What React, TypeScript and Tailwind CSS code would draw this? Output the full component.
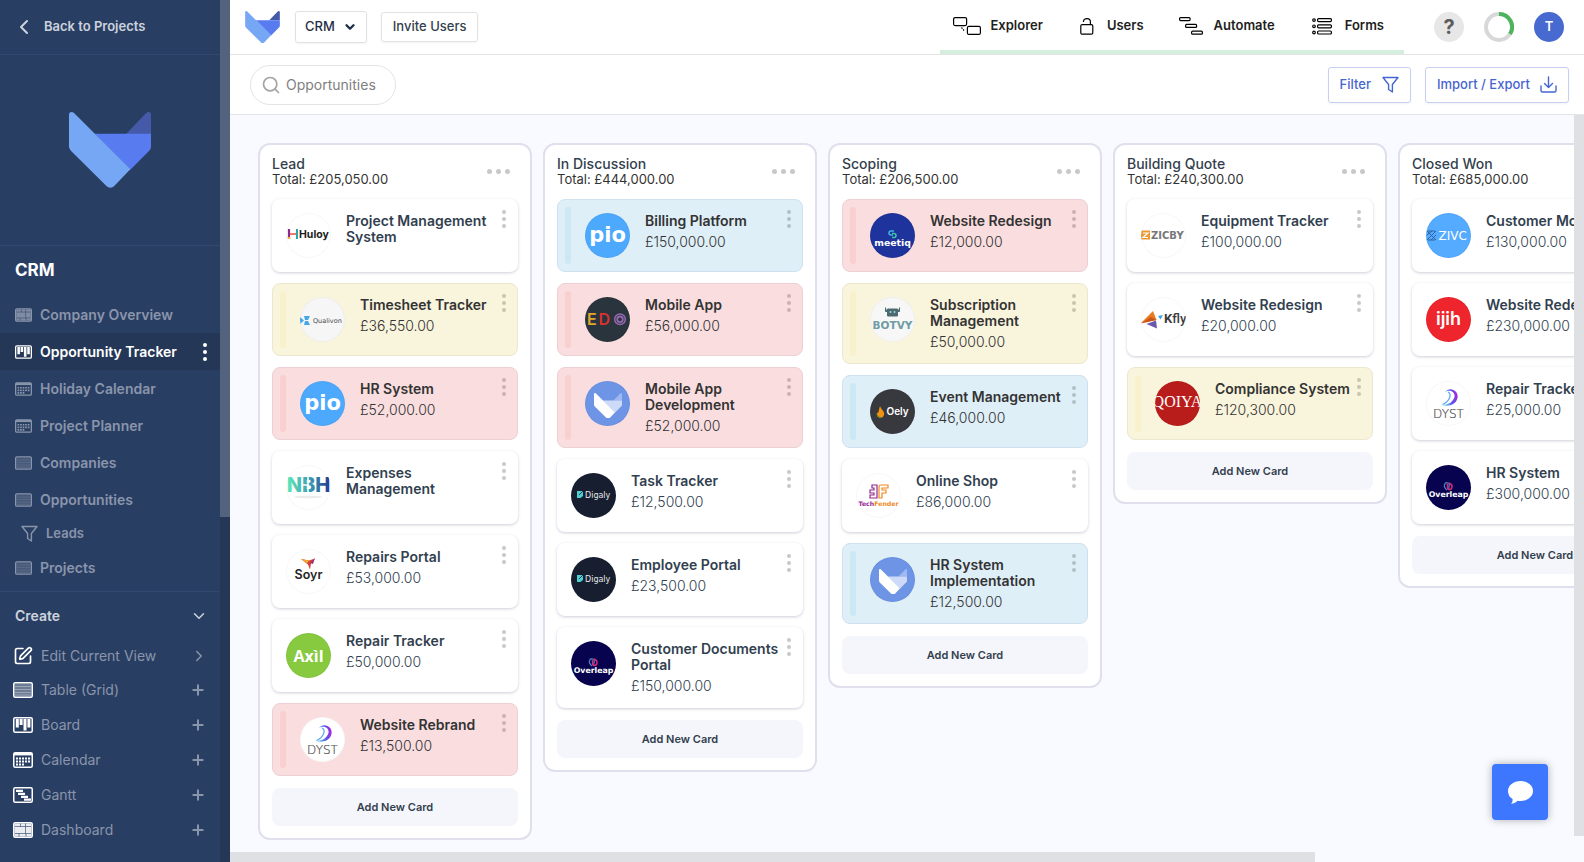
import type { ReactNode } from "react";
import { ChevronDown, ChevronLeft, ChevronRight, Plus, Search, SquarePen } from "lucide-react";
import clsx from "clsx";

type Tone = "plain" | "red" | "yellow" | "blue";

interface CardData {
  title: string;
  price?: string;
  brand: string;
  tone?: Tone;
}

interface ColumnData {
  name: string;
  total: string;
  cards: CardData[];
}

type ViewKind = "dashboard" | "board" | "calendar" | "table" | "gantt";

const COLUMNS: ColumnData[] = [
  {
    name: "Lead",
    total: "£205,050.00",
    cards: [
      { title: "Project Management System", brand: "huloy" },
      { title: "Timesheet Tracker", price: "£36,550.00", brand: "qualivon", tone: "yellow" },
      { title: "HR System", price: "£52,000.00", brand: "pio", tone: "red" },
      { title: "Expenses Management", brand: "nbh" },
      { title: "Repairs Portal", price: "£53,000.00", brand: "soyr" },
      { title: "Repair Tracker", price: "£50,000.00", brand: "axil" },
      { title: "Website Rebrand", price: "£13,500.00", brand: "dyst", tone: "red" },
    ],
  },
  {
    name: "In Discussion",
    total: "£444,000.00",
    cards: [
      { title: "Billing Platform", price: "£150,000.00", brand: "pio", tone: "blue" },
      { title: "Mobile App", price: "£56,000.00", brand: "edo", tone: "red" },
      { title: "Mobile App Development", price: "£52,000.00", brand: "fox", tone: "red" },
      { title: "Task Tracker", price: "£12,500.00", brand: "digaly" },
      { title: "Employee Portal", price: "£23,500.00", brand: "digaly" },
      { title: "Customer Documents Portal", price: "£150,000.00", brand: "overleap" },
    ],
  },
  {
    name: "Scoping",
    total: "£206,500.00",
    cards: [
      { title: "Website Redesign", price: "£12,000.00", brand: "meetiq", tone: "red" },
      { title: "Subscription Management", price: "£50,000.00", brand: "botvy", tone: "yellow" },
      { title: "Event Management", price: "£46,000.00", brand: "oely", tone: "blue" },
      { title: "Online Shop", price: "£86,000.00", brand: "techfender" },
      { title: "HR System Implementation", price: "£12,500.00", brand: "fox", tone: "blue" },
    ],
  },
  {
    name: "Building Quote",
    total: "£240,300.00",
    cards: [
      { title: "Equipment Tracker", price: "£100,000.00", brand: "zicby" },
      { title: "Website Redesign", price: "£20,000.00", brand: "kfly" },
      { title: "Compliance System", price: "£120,300.00", brand: "qoiya", tone: "yellow" },
    ],
  },
  {
    name: "Closed Won",
    total: "£685,000.00",
    cards: [
      { title: "Customer Mobile App", price: "£130,000.00", brand: "zivc" },
      { title: "Website Redesign", price: "£230,000.00", brand: "ijih" },
      { title: "Repair Tracker", price: "£25,000.00", brand: "dyst" },
      { title: "HR System", price: "£300,000.00", brand: "overleap" },
    ],
  },
];

const VIEWS: { label: string; icon: ViewKind }[] = [
  { label: "Company Overview", icon: "dashboard" },
  { label: "Opportunity Tracker", icon: "board" },
  { label: "Holiday Calendar", icon: "calendar" },
  { label: "Project Planner", icon: "calendar" },
  { label: "Companies", icon: "table" },
  { label: "Opportunities", icon: "table" },
];

const CREATE_ITEMS: { label: string; icon: ViewKind }[] = [
  { label: "Table (Grid)", icon: "table" },
  { label: "Board", icon: "board" },
  { label: "Calendar", icon: "calendar" },
  { label: "Gantt", icon: "gantt" },
  { label: "Dashboard", icon: "dashboard" },
];

function FoxLogo({ className, colors = ["#76a7f4", "#597bf0", "#4459a8"] }: { className?: string; colors?: string[] }) {
  return (
    <svg viewBox="0 0 246 227" className={className} aria-hidden="true">
      <path d="M171 66 231 4Q235 0 239 0Q246 0 246 7V66Z" fill={colors[2]} />
      <path d="M76 65H246V104Q246 111 240 117L184 173Z" fill={colors[1]} />
      <path
        d="M0 8Q0 0 8 0Q12 0 15 3L184 172 135 223Q131 227 124 227Q117 227 113 223L7 118Q0 110 0 104Z"
        fill={colors[0]}
      />
    </svg>
  );
}

function ViewIcon({ kind, className }: { kind: ViewKind; className?: string }) {
  return (
    <svg viewBox="0 0 20 16" className={className} fill="none" stroke="currentColor" aria-hidden="true">
      <rect x="0.75" y="0.75" width="18.5" height="14.5" rx="1.5" strokeWidth="1.5" />
      {kind === "table" && (
        <>
          <rect x="1.5" y="1.5" width="17" height="13" fill="currentColor" fillOpacity="0.32" stroke="none" />
          <path d="M2 4.5h16M2 7.5h16M2 10.500h16M2 13h16" strokeWidth="0.8" strokeOpacity="0.4" />
        </>
      )}
      {kind === "board" && (
        <path d="M4.300 2v8.5M8.100 2v6M12 2v11.500M15.900 2v8.5" strokeWidth="3" />
      )}
      {kind === "calendar" && (
        <>
          <path d="M1 2.2h18" strokeWidth="2.400" />
          <path d="M3 6.500h14.5M3 9.500h14.500" strokeWidth="2" strokeDasharray="2 1" />
          <path d="M3 12.500h8.500" strokeWidth="2" strokeDasharray="2 1" />
        </>
      )}
      {kind === "gantt" && (
        <path d="M3 3.800h7M5 6.800h7M8 9.800h7M11 12.600h7" strokeWidth="2.200" />
      )}
      {kind === "dashboard" && (
        <>
          <rect x="1.5" y="1.5" width="17" height="13" fill="currentColor" fillOpacity="0.9" stroke="none" />
          <path d="M2 4.500h16M2 11.500h16M7.500 1.500v3M12.500 1.500v10M6 11.500v3M13 11.500v3" stroke="#293e63" strokeWidth="1" strokeOpacity="0.6" />
        </>
      )}
    </svg>
  );
}

function FunnelIcon({ className }: { className?: string }) {
  return (
    <svg viewBox="0 0 17 17" className={className} fill="none" stroke="currentColor" strokeWidth="1.4" strokeLinejoin="round" aria-hidden="true">
      <path d="M1 1.5h15L10.4 8.5V16L6.6 13.500V8.500Z" />
    </svg>
  );
}

function Dots({ vertical, size = "small" }: { vertical?: boolean; size?: "small" | "large" }) {
  const dot = clsx("rounded-full bg-current", size === "large" ? "size-[5px]" : "size-1");
  return (
    <span className={clsx("flex", vertical ? "flex-col gap-[3px]" : "gap-1")}>
      <span className={dot} />
      <span className={dot} />
      <span className={dot} />
    </span>
  );
}

const INTER = "Inter, sans-serif";
const WIDE = '"DejaVu Sans", sans-serif';

const BRANDS: Record<string, { bg: string; art: ReactNode }> = {
  huloy: {
    bg: "#ffffff",
    art: (
      <>
        <path d="M3 16v10" stroke="#8e2a8c" strokeWidth="2.2" />
        <path d="M3 24v2" stroke="#f3b32b" strokeWidth="2.2" />
        <path d="M4 21h6" stroke="#e0533d" strokeWidth="1.6" />
        <path d="M11 16v10" stroke="#2ba6a4" strokeWidth="2" />
        <text x="13" y="25" fontFamily={INTER} fontWeight="700" fontSize="10.500" fill="#1c1c1c">Huloy</text>
      </>
    ),
  },
  qualivon: {
    bg: "#f6f6f7",
    art: (
      <>
        <path d="M0 20v7L4 23.500ZM4 19h6l-2 4H5ZM4 28h6l-2-4H5Z" fill="#45a8e6" />
        <text x="13" y="26" fontFamily={WIDE} fontSize="6.500" fill="#4a4a4a">Qualivon</text>
      </>
    ),
  },
  pio: {
    bg: "#4ca9fd",
    art: <text x="22.500" y="29" textAnchor="middle" fontFamily={WIDE} fontWeight="700" fontSize="21" fill="#fff">pio</text>,
  },
  nbh: {
    bg: "#ffffff",
    art: (
      <>
        <defs>
          <linearGradient id="nbh" x1="0" x2="1">
            <stop offset="0" stopColor="#5fe8b5" />
            <stop offset="0.5" stopColor="#3fa3b4" />
            <stop offset="1" stopColor="#25378f" />
          </linearGradient>
        </defs>
        <text x="22.500" y="27" textAnchor="middle" fontFamily={INTER} fontWeight="800" fontSize="20" fill="url(#nbh)">NBH</text>
        <path d="M17 20h6M22 12v16" stroke="#fff" strokeWidth="1.500" />
        <ellipse cx="22" cy="32" rx="14" ry="1.300" fill="#ebebeb" />
      </>
    ),
  },
  soyr: {
    bg: "#ffffff",
    art: (
      <>
        <path d="M15 10l8 1.500 6-2-4 5-1 6-2-5Z" fill="#d8403f" />
        <path d="M15 10l8 1.500-2 3Z" fill="#f0a52b" />
        <path d="M24 14l5-5-2 6Z" fill="#93306f" />
        <text x="22.500" y="30" textAnchor="middle" fontFamily={INTER} fontWeight="600" fontSize="12.500" fill="#262626">Soyr</text>
      </>
    ),
  },
  axil: {
    bg: "#87c93f",
    art: <text x="22.500" y="29" textAnchor="middle" fontFamily='"Open Sans", sans-serif' fontWeight="700" fontSize="16" fill="#fff">Axìl</text>,
  },
  dyst: {
    bg: "#ffffff",
    art: (
      <>
        <defs>
          <linearGradient id="dyst" x1="0" x2="1" y1="0.5" y2="0.3">
            <stop offset="0" stopColor="#59dff0" />
            <stop offset="0.6" stopColor="#5a55e8" />
            <stop offset="1" stopColor="#b01fe0" />
          </linearGradient>
        </defs>
        <path d="M19 11C24 5 33 10 31.500 17C30 24 22 26 16 24C22 24 27 21 28.500 16C29.500 11 24 8 19 11Z" fill="url(#dyst)" />
        <path d="M22 11C26 13 24 20 16.500 23.500" fill="none" stroke="#65a8f2" strokeWidth="1.300" />
        <text x="22.500" y="37" textAnchor="middle" fontFamily={WIDE} fontWeight="200" fontSize="12" fill="#4a4a4a" stroke="#4a4a4a" strokeWidth="0.200">DYST</text>
      </>
    ),
  },
  edo: {
    bg: "#2a343d",
    art: (
      <g fontFamily={INTER} fontWeight="600" fontSize="16">
        <text x="2" y="28" fill="#e0a72e">E</text>
        <text x="13.500" y="28" fill="#dc3131">D</text>
        <circle cx="35" cy="22.300" r="5.300" fill="none" stroke="#9469b1" strokeWidth="1.500" />
        <circle cx="35" cy="22.300" r="2.800" fill="none" stroke="#9469b1" strokeWidth="1.800" />
      </g>
    ),
  },
  digaly: {
    bg: "#171e2f",
    art: (
      <>
        <path d="M6 18h6v5l-2.500 2H6v-5Z" fill="#50cfd0" />
        <path d="M8 22l4-4" stroke="#171e2f" strokeWidth="0.800" />
        <text x="14" y="25" fontFamily={WIDE} fontSize="8" fill="#e6e8ec">Digaly</text>
      </>
    ),
  },
  overleap: {
    bg: "#08034f",
    art: (
      <>
        <path d="M21 25C16 21 19 17 22 18C25 19 22 22 23 24" fill="none" stroke="#4b7cc9" strokeWidth="1.300" />
        <path d="M23 18C28 20 26 25 23 24.500C20 24 23 21 21 19" fill="none" stroke="#d52a73" strokeWidth="1.600" />
        <text x="22.500" y="31.500" textAnchor="middle" fontFamily={WIDE} fontWeight="700" fontSize="7.800" fill="#fff">Overleap</text>
      </>
    ),
  },
  meetiq: {
    bg: "#1e339b",
    art: (
      <>
        <path d="M24 18H21Q19 18 19 20Q19 22 21 22H23" fill="none" stroke="#3fb4e6" strokeWidth="1.500" />
        <path d="M22 20.500H24Q26 20.500 26 22.500Q26 24.500 24 24.500H22" fill="none" stroke="#3cc79a" strokeWidth="1.500" />
        <text x="22.500" y="33" textAnchor="middle" fontFamily={WIDE} fontWeight="700" fontSize="9.300" fill="#fff">meetiq</text>
      </>
    ),
  },
  botvy: {
    bg: "#f7f7f7",
    art: (
      <>
        <path d="M17.500 12h10v7h-10ZM15.500 10.500v4h2M29.500 10.500v4h-2" fill="#4d6b73" stroke="#4d6b73" strokeWidth="1" />
        <circle cx="20.500" cy="15" r="1" fill="#a4d6d0" />
        <circle cx="24.500" cy="15" r="1" fill="#a4d6d0" />
        <text x="22.500" y="32" textAnchor="middle" fontFamily={WIDE} fontWeight="700" fontSize="10.500" fill="#6f9ba2">BOTVY</text>
      </>
    ),
  },
  oely: {
    bg: "#38393f",
    art: (
      <>
        <path d="M10 17C11 21 15 22 14 26Q13 29 10 29Q6 28 7 24Q8 24 8.500 23Q9 20 10 17Z" fill="#f0920f" />
        <path d="M7 25Q8 29 12 28.500" fill="none" stroke="#5c8a34" strokeWidth="1" />
        <text x="16.500" y="26" fontFamily={INTER} fontWeight="600" fontSize="10" fill="#fff">Oely</text>
      </>
    ),
  },
  techfender: {
    bg: "#ffffff",
    art: (
      <>
        <g fill="none" strokeWidth="1.200">
          <path d="M16 12h5v13h-7v-3h4v-2h-4v-3h4v-2h-2Z" stroke="#93278f" />
          <path d="M32 12v3h-6v2h4v3h-4v5h-3V14Q23 12 25 12Z" stroke="#f08a24" />
        </g>
        <text x="22.500" y="33" textAnchor="middle" fontFamily={WIDE} fontWeight="700" fontSize="6.200" fill="#93278f">
          Tech<tspan fill="#f08a24">Fender</tspan>
        </text>
      </>
    ),
  },
  zicby: {
    bg: "#ffffff",
    art: (
      <>
        <rect x="0" y="17.500" width="9" height="9" fill="#e99a35" />
        <path d="M2 20h5L2 24.500h5" fill="none" stroke="#fff" strokeWidth="1.200" />
        <text x="10" y="25.500" fontFamily={WIDE} fontWeight="700" fontSize="10" fill="#77777b">ZICBY</text>
      </>
    ),
  },
  kfly: {
    bg: "#ffffff",
    art: (
      <>
        <path d="M0 26L12 14l3.500 9Z" fill="#ea7a22" />
        <path d="M0 26.500L15.500 23 10 20Z" fill="#c95518" />
        <path d="M5.500 27L15 23.500l1 8Z" fill="#6a58ab" />
        <path d="M17 19l5-1-2.500 4.500Z" fill="#3fa2de" />
        <text x="23" y="26" fontFamily="Roboto, sans-serif" fontWeight="700" fontSize="13" fill="#3c3c40">K<tspan fontWeight="500">fly</tspan></text>
      </>
    ),
  },
  qoiya: {
    bg: "#b91d1b",
    art: <text x="22.500" y="26" textAnchor="middle" fontFamily='"Liberation Serif", serif' fontSize="16" fill="#fff">QOIYA</text>,
  },
  zivc: {
    bg: "#55abff",
    art: (
      <>
        <path d="M1 18l9 9M10 18l-9 9M2 18h7M2 27h7M1 22l5-4M5 27l5-5" stroke="#2b5f96" strokeWidth="0.900" />
        <text x="12.500" y="27" fontFamily={WIDE} fontSize="12" fill="#fff">ZIVC</text>
      </>
    ),
  },
  ijih: {
    bg: "#ee252c",
    art: <text x="22.500" y="28" textAnchor="middle" fontFamily={INTER} fontWeight="600" fontSize="18" fill="#fff">ijih</text>,
  },
  fox: { bg: "#6e94e6", art: null },
};

function Avatar({ brand }: { brand: string }) {
  const { bg, art } = BRANDS[brand];
  return (
    <div
      className="flex size-[45px] shrink-0 items-center justify-center overflow-hidden rounded-full shadow-[inset_0_0_0_1px_rgba(0,0,0,0.03)]"
      style={{ backgroundColor: bg }}
    >
      {brand === "fox" ? (
        <FoxLogo className="mt-1 w-7" colors={["#ffffff", "#cddbf8", "#9fb8f0"]} />
      ) : (
        <svg viewBox="0 0 45 45" className="size-full">{art}</svg>
      )}
    </div>
  );
}

const CARD_TONES: Record<Tone, string> = {
  plain: "border-transparent bg-white text-[#323f4f] shadow-[0_1px_3px_rgba(60,60,110,0.25)]",
  red: "border-[#edd0d4] bg-[#fadedf] text-[#333]",
  yellow: "border-[#ece7cf] bg-[#f9f4dc] text-[#333]",
  blue: "border-[#cfe1ee] bg-[#dfeff8] text-[#333]",
};

const BAR_TONES: Record<Tone, string> = {
  plain: "",
  red: "bg-[#facfd0]",
  yellow: "bg-[#f8f1cb]",
  blue: "bg-[#cde8f5]",
};

const DOT_TONES: Record<Tone, string> = {
  plain: "text-[#c8c8c8]",
  red: "text-[#c9b2b3]",
  yellow: "text-[#c8c4b0]",
  blue: "text-[#b2bfc6]",
};

function Card({ card }: { card: CardData }) {
  const tone = card.tone ?? "plain";
  return (
    <article className={clsx("flex min-h-[73px] rounded-lg border pl-[7px]", CARD_TONES[tone])}>
      {tone !== "plain" && <div className={clsx("my-[7px] mr-2 w-1.5 rounded-sm", BAR_TONES[tone])} />}
      <div className="flex min-w-0 flex-1 gap-[15px] pt-[13px] pb-2.5 pl-1.5">
        <Avatar brand={card.brand} />
        <div className="min-w-0 flex-1">
          <h3 className="text-sm leading-4 font-semibold">{card.title}</h3>
          {card.price && <p className="mt-0.5 text-sm leading-[22px] font-light">{card.price}</p>}
        </div>
      </div>
      <button aria-label={`${card.title} options`} className={clsx("self-start pt-2.5 pr-[11px]", DOT_TONES[tone])}>
        <Dots vertical />
      </button>
    </article>
  );
}

function Column({ column }: { column: ColumnData }) {
  return (
    <section className="w-[274px] shrink-0 rounded-xl border-2 border-[#e0dfed] bg-white px-3 pt-[11px] pb-3">
      <header className="flex h-[43px] items-start justify-between text-[#333f4d]">
        <div>
          <h2 className="text-sm leading-4 font-medium">{column.name}</h2>
          <p className="text-[13px] leading-[15px] text-[#333]">Total: {column.total}</p>
        </div>
        <button aria-label={`${column.name} options`} className="pt-[13px] pr-2 text-[#c8c8c8]">
          <Dots size="large" />
        </button>
      </header>
      <div className="flex flex-col gap-[11px]">
        {column.cards.map((card) => (
          <Card key={card.title} card={card} />
        ))}
      </div>
      <button className="mt-3 h-[38px] w-full rounded-lg bg-[#f5f6fc] text-[11px] font-semibold text-[#333f4d]">
        Add New Card
      </button>
    </section>
  );
}

function ViewLink({ label, icon, active }: { label: string; icon: ViewKind; active?: boolean }) {
  return (
    <a
      href="#"
      className={clsx(
        "flex h-[37px] items-center pr-[13px] pl-[15px] text-sm font-semibold",
        active ? "bg-[#243757] text-white" : "text-[#8995ab]",
      )}
    >
      <ViewIcon kind={icon} className="mr-2 h-3.5 w-[17px]" />
      {label}
      {active && (
        <span className="ml-auto">
          <Dots vertical />
        </span>
      )}
    </a>
  );
}

function Sidebar() {
  return (
    <aside className="flex w-[230px] shrink-0 bg-[#293e63]">
      <div className="min-w-0 flex-1 overflow-hidden">
        <a href="#" className="flex h-[55px] items-center border-b border-[#33486e] pl-3 text-[13px] font-semibold text-[#ccd3dd]">
          <ChevronLeft className="mr-2 size-6" strokeWidth={2} />
          Back to Projects
        </a>
        <div className="flex h-[191px] items-center justify-center border-b border-[#33486e]">
          <FoxLogo className="w-[82px]" />
        </div>
        <h1 className="flex h-[50px] items-center pl-[15px] text-[17px] font-bold text-white">CRM</h1>
        <nav>
          {VIEWS.map((view) => (
            <ViewLink key={view.label} {...view} active={view.label === "Opportunity Tracker"} />
          ))}
          <a href="#" className="flex h-[31px] items-center pl-[21px] text-[13px] font-semibold text-[#8995ab]">
            <FunnelIcon className="mr-2 size-[17px]" />
            Leads
          </a>
          <ViewLink label="Projects" icon="table" />
        </nav>
        <div className="mt-[5px] border-t border-[#33486e]">
          <button className="flex h-12 w-full items-center justify-between pr-3 pl-[15px] text-sm font-semibold text-[#ccd3dd]">
            Create
            <ChevronDown className="size-[18px]" strokeWidth={2} />
          </button>
          <button className="flex h-8 w-full items-center pr-3 pl-[13px] text-sm text-[#8995ab]">
            <SquarePen className="mr-2 size-5 text-white" strokeWidth={2} />
            Edit Current View
            <ChevronRight className="ml-auto size-[18px]" strokeWidth={2} />
          </button>
          {CREATE_ITEMS.map((item) => (
            <button key={item.label} className="flex h-[35px] w-full items-center pr-3.5 pl-[13px] text-sm text-[#8995ab]">
              <ViewIcon kind={item.icon} className="mr-2 h-4 w-5 text-white" />
              {item.label}
              <Plus className="ml-auto size-4" strokeWidth={3} />
            </button>
          ))}
        </div>
      </div>
      <div className="w-2.5 bg-[#243757]">
        <div className="h-3/5 bg-[#53637e]" />
      </div>
    </aside>
  );
}

function TopNav() {
  return (
    <nav className="flex h-full items-center self-stretch border-b-4 border-[#d5efdf] pt-0.5 pr-5 pl-[13px] text-[13px] font-semibold text-[#1e1e1e]">
      <a href="#" className="mr-[37px] flex items-center gap-[9px]">
        <svg viewBox="0 0 28 18" className="h-[18px] w-7" fill="none" stroke="#000" strokeWidth="1.2">
          <rect x="0.6" y="0.6" width="13" height="8" rx="1.500" />
          <rect x="14.400" y="9.400" width="13" height="8" rx="1.500" />
          <path d="M8.500 10.500l2.500 3" strokeDasharray="1.500 1" />
        </svg>
        Explorer
      </a>
      <a href="#" className="mr-[35px] flex items-center gap-[13px]">
        <svg viewBox="0 0 14 17" className="h-[17px] w-3.5" fill="none" stroke="#000" strokeWidth="1.2">
          <rect x="0.8" y="6.600" width="12" height="9.600" rx="1.500" />
          <path d="M3.500 4V3.500Q3.500 0.700 7 0.700T10.400 4V6.500" />
        </svg>
        Users
      </a>
      <a href="#" className="mr-[37px] flex items-center gap-[11px]">
        <svg viewBox="0 0 24 18" className="h-[18px] w-6" fill="none" stroke="#000" strokeWidth="1.2">
          <rect x="0.6" y="0.6" width="10.500" height="3" rx="1" />
          <rect x="6.600" y="7.400" width="11" height="3" rx="1" />
          <rect x="12.600" y="14.200" width="10.800" height="3" rx="1" />
        </svg>
        Automate
      </a>
      <a href="#" className="flex items-center gap-[13px]">
        <svg viewBox="0 0 20 17" className="h-[17px] w-5" fill="none" stroke="#000" strokeWidth="1.2">
          {[0.6, 6.8, 13].map((y) => (
            <g key={y}>
              <circle cx="2" cy={y + 1.5} r="1.300" />
              <rect x="5.600" y={y} width="13.800" height="3" rx="1" />
            </g>
          ))}
        </svg>
        Forms
      </a>
    </nav>
  );
}

function Header() {
  return (
    <header className="flex h-[55px] items-center border-b border-[#e4e4e6] bg-white pr-5 pl-[15px]">
      <FoxLogo className="h-8 w-[35px]" />
      <button className="ml-[15px] flex h-8 items-center gap-2 rounded-[3px] border border-[#e2e2e4] px-[9px] text-[13px] font-medium text-[#1f2e45] shadow-xs">
        CRM
        <ChevronDown className="size-3.5" strokeWidth={4} />
      </button>
      <button className="ml-3.5 h-[30px] rounded-[3px] border border-[#e2e2e4] px-[11px] text-[13px] font-medium text-[#333f4d] shadow-xs">
        Invite Users
      </button>
      <div className="ml-auto flex items-center self-stretch">
        <TopNav />
        <div className="ml-[30px] flex gap-5">
          <button className="flex size-[30px] items-center justify-center rounded-full bg-[#e7e7e7] text-xl font-bold text-[#5c5c5c]">?</button>
          <svg viewBox="0 0 30 30" className="size-[30px]" fill="none" strokeWidth="4">
            <circle cx="15" cy="15" r="13" stroke="#d8d8d8" />
            <path d="M15 2A13 13 0 0 1 26 22" stroke="#4cb45c" />
          </svg>
          <button className="flex size-[30px] items-center justify-center rounded-full bg-[#476ad0] text-[13px] font-semibold text-white">T</button>
        </div>
      </div>
    </header>
  );
}

function Toolbar() {
  return (
    <div className="flex h-[60px] items-center justify-between border-b border-[#e4e4e6] bg-white pr-[15px] pl-5">
      <label className="flex h-10 w-[146px] items-center gap-[5px] rounded-full border border-[#e4e4e6] pl-2.5 text-[#a3a3a3]">
        <Search className="size-5 shrink-0" strokeWidth={2} />
        <input
          aria-label="Search opportunities"
          placeholder="Opportunities"
          className="w-full min-w-0 text-sm text-[#333] outline-none placeholder:text-[#808080]"
        />
      </label>
      <div className="flex gap-3.5 text-[13px] font-medium text-[#4666cf]">
        <button className="flex h-9 items-center gap-[11px] rounded-[3px] border border-[#c5d0f1] px-[11px] shadow-xs">
          Filter
          <FunnelIcon className="size-[17px]" />
        </button>
        <button className="flex h-9 items-center gap-2.5 rounded-[3px] border border-[#c5d0f1] px-[11px] shadow-xs">
          Import / Export
          <svg viewBox="0 0 17 17" className="size-[17px]" fill="none" stroke="currentColor" strokeWidth="1.400" strokeLinecap="round" strokeLinejoin="round">
            <path d="M8.500 1v10M4.500 7.500l4 4 4-4M1 10v4.500Q1 16 2.500 16h12Q16 16 16 14.500V10" />
          </svg>
        </button>
      </div>
    </div>
  );
}

export default function App() {
  return (
    <div className="flex h-screen overflow-hidden font-['Inter',sans-serif]">
      <Sidebar />
      <div className="flex min-w-0 flex-1 flex-col">
        <Header />
        <Toolbar />
        <div className="flex min-h-0 flex-1 bg-[#f9faff]">
          <div className="flex min-w-0 flex-1 flex-col">
            <main className="flex min-h-0 flex-1 items-start gap-[11px] overflow-hidden px-7 pt-7">
              {COLUMNS.map((column) => (
                <Column key={column.name} column={column} />
              ))}
            </main>
            <div className="h-2.5 shrink-0">
              <div className="h-full w-[80.7%] bg-[#dfe0e4]" />
            </div>
          </div>
          <div className="w-2.5 shrink-0">
            <div className="h-[96.5%] bg-[#dfe0e4]" />
          </div>
        </div>
      </div>
      <button
        aria-label="Open chat"
        className="fixed right-9 bottom-[42px] flex size-14 items-center justify-center rounded bg-[#3d76ff] shadow-[0_0_8px_rgba(0,0,0,0.3)]"
      >
        <svg viewBox="0 0 25 23" className="h-[23px] w-[25px]" fill="#fff">
          <path d="M12.500 0C19.500 0 25 4.400 25 10S19.500 20 12.500 20Q11 20 9.800 19.800Q7 22.600 3 23Q5 20.500 4.600 18Q0 15.200 0 10C0 4.400 5.500 0 12.500 0Z" />
        </svg>
      </button>
    </div>
  );
}
